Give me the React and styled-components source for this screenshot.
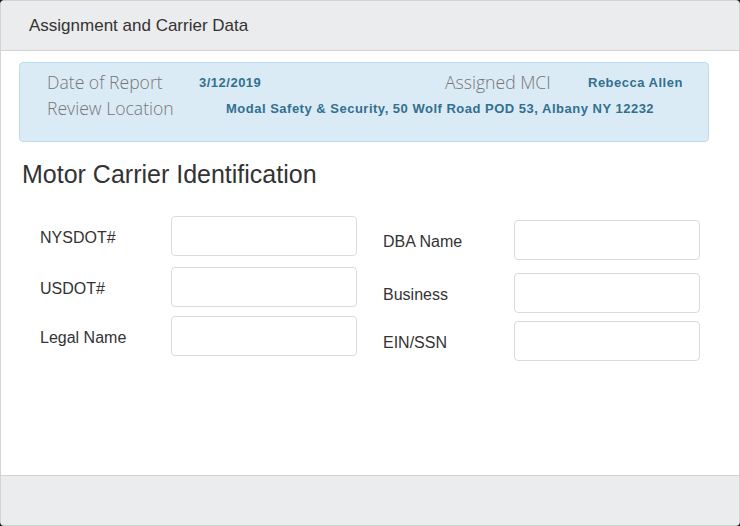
import React from "react";
import styled, { createGlobalStyle } from "styled-components";

const GlobalStyle = createGlobalStyle`
  html, body {
    margin: 0;
    padding: 0;
    background: #1a1a1a;
  }
  * { box-sizing: border-box; }
`;

const Panel = styled.div`
  width: 740px;
  height: 526px;
  background: #fff;
  border: 1px solid #d2d3d5;
  border-radius: 4px;
  overflow: hidden;
  display: flex;
  flex-direction: column;
  font-family: "Liberation Sans", Arial, sans-serif;
  color: #333;
`;

const Header = styled.div`
  height: 50px;
  flex-shrink: 0;
  background: #ebecee;
  border-bottom: 1px solid #d2d3d5;
  padding: 0 28px;
  display: flex;
  align-items: center;
  font-size: 17px;
`;

const Body = styled.div`
  flex: 1;
  padding: 11px 30px 0 18px;
`;

const InfoBox = styled.div`
  background: #dbebf5;
  border: 1px solid #b9def0;
  border-radius: 4px;
  padding: 6px 0 20px 27px;
`;

const InfoRow = styled.div`
  display: flex;
  align-items: center;
  height: 26px;
`;

const InfoLabel = styled.span`
  width: ${(p) => p.w}px;
  flex-shrink: 0;
  font-family: "Open Sans", "Liberation Sans", sans-serif;
  font-weight: 300;
  font-size: 17.6px;
  color: #767676;
  white-space: nowrap;
`;

const InfoValue = styled.span`
  width: ${(p) => (p.w ? `${p.w}px` : "auto")};
  flex-shrink: 0;
  font-weight: bold;
  font-size: 13px;
  letter-spacing: 0.5px;
  color: #32708f;
  white-space: nowrap;
`;

const Title = styled.h2`
  margin: 18px 0 0 3px;
  font-weight: normal;
  font-size: 25px;
  line-height: 28px;
  color: #333;
`;

const Form = styled.div`
  display: grid;
  grid-template-columns: 317px 317px;
  column-gap: 26px;
  margin: 28px 0 0 21px;
`;

const Column = styled.div`
  display: flex;
  flex-direction: column;
  padding-top: ${(p) => p.offset || 0}px;
`;

const FieldRow = styled.div`
  display: flex;
  align-items: center;
  margin-top: ${(p) => p.gap || 0}px;
`;

const Label = styled.label`
  width: 131px;
  font-size: 16px;
  color: #333;
  padding-top: 4px;
`;

const Input = styled.input`
  width: 187px;
  height: 40px;
  border: 1px solid #dadada;
  border-radius: 4px;
  background: #fff;
  outline: none;
`;

const Footer = styled.div`
  height: 50px;
  flex-shrink: 0;
  background: #ebecee;
  border-top: 1px solid #d2d3d5;
`;

const leftFields = [
  { label: "NYSDOT#", gap: 0 },
  { label: "USDOT#", gap: 11 },
  { label: "Legal Name", gap: 9 },
];

const rightFields = [
  { label: "DBA Name", gap: 0 },
  { label: "Business", gap: 13 },
  { label: "EIN/SSN", gap: 8 },
];

export default function App() {
  return (
    <>
      <GlobalStyle />
      <Panel>
        <Header>Assignment and Carrier Data</Header>
        <Body>
          <InfoBox>
            <InfoRow>
              <InfoLabel w={152}>Date of Report</InfoLabel>
              <InfoValue w={246}>3/12/2019</InfoValue>
              <InfoLabel w={143}>Assigned MCI</InfoLabel>
              <InfoValue>Rebecca Allen</InfoValue>
            </InfoRow>
            <InfoRow>
              <InfoLabel w={179}>Review Location</InfoLabel>
              <InfoValue>Modal Safety &amp; Security, 50 Wolf Road POD 53, Albany NY 12232</InfoValue>
            </InfoRow>
          </InfoBox>
          <Title>Motor Carrier Identification</Title>
          <Form>
            <Column>
              {leftFields.map((f) => (
                <FieldRow key={f.label} gap={f.gap}>
                  <Label>{f.label}</Label>
                  <Input type="text" />
                </FieldRow>
              ))}
            </Column>
            <Column offset={4}>
              {rightFields.map((f) => (
                <FieldRow key={f.label} gap={f.gap}>
                  <Label>{f.label}</Label>
                  <Input type="text" />
                </FieldRow>
              ))}
            </Column>
          </Form>
        </Body>
        <Footer />
      </Panel>
    </>
  );
}
